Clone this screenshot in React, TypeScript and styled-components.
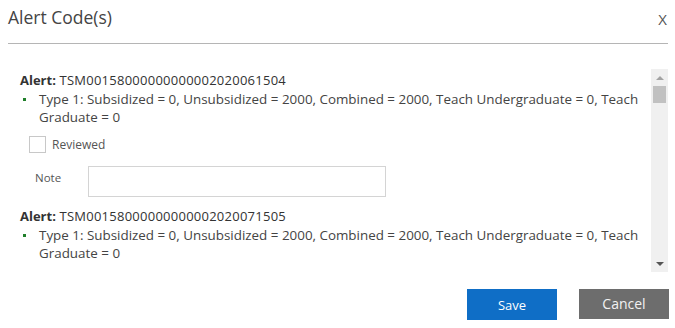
import React from "react";
import styled, { createGlobalStyle } from "styled-components";

const Global = createGlobalStyle`
  html, body { margin: 0; padding: 0; background: #fff; }
  body { font-family: "Open Sans", "Liberation Sans", sans-serif; color: #333; }
  * { box-sizing: border-box; }
`;

const Dialog = styled.div`
  width: 675px;
  height: 328px;
  padding: 0 6px 0 8px;
  display: flex;
  flex-direction: column;
`;

const Header = styled.div`
  height: 44px;
  display: flex;
  align-items: flex-start;
  justify-content: space-between;
  border-bottom: 1px solid #b5b5b5;
  padding-top: 5px;
  margin-right: 1px;
`;

const Title = styled.h1`
  margin: 0;
  font-size: 17.5px;
  font-weight: 400;
  color: #444;
  line-height: 24px;
`;

const Close = styled.button`
  border: none;
  background: none;
  padding: 0;
  margin: 4px 1px 0 0;
  font-family: "Open Sans", sans-serif;
  font-size: 15px;
  color: #555;
  line-height: 20px;
  cursor: pointer;
`;

const Body = styled.div`
  margin-top: 25px;
  height: 203px;
  display: flex;
  margin-right: 1px;
`;

const Content = styled.div`
  flex: 1;
  overflow: hidden;
  padding: 2px 5px 0 12px;
`;

const Alert = styled.div`
  font-size: 13px;
  letter-spacing: 0.25px;
  line-height: 18px;
  color: #333;
  b { font-weight: 700; letter-spacing: 0; }
`;

const List = styled.ul`
  margin: 1px 0 0;
  padding: 0 0 0 19px;
  list-style: none;
`;

const Item = styled.li`
  position: relative;
  font-size: 13.4px;
  line-height: 18px;
  color: #444;
  &::before {
    content: "";
    position: absolute;
    left: -16px;
    top: 8px;
    width: 3px;
    height: 3px;
    background: #1f7f2a;
  }
`;

const CheckRow = styled.label`
  display: flex;
  align-items: center;
  gap: 6px;
  margin: 9px 0 0 9px;
  font-size: 12px;
  color: #555;
  height: 18px;
`;

const Box = styled.span`
  width: 17px;
  height: 17px;
  border: 1px solid #c8c8c8;
  background: #fff;
`;

const NoteRow = styled.div`
  display: flex;
  align-items: center;
  margin: 13px 0 10px 15px;
`;

const NoteLabel = styled.span`
  width: 53px;
  font-size: 11.5px;
  color: #555;
  margin-top: -8px;
`;

const NoteInput = styled.div`
  width: 298px;
  height: 31px;
  border: 1px solid #d4d4d4;
`;

const Scrollbar = styled.div`
  width: 17px;
  background: #f0f0f0;
  display: flex;
  flex-direction: column;
  align-items: center;
`;

const Arrow = styled.div<{ $down?: boolean }>`
  width: 0;
  height: 0;
  border-left: 4px solid transparent;
  border-right: 4px solid transparent;
  ${(p) =>
    p.$down
      ? "border-top: 4px solid #555; margin-top: auto; margin-bottom: 6px;"
      : "border-bottom: 4px solid #a3a3a3; margin-top: 7px;"}
`;

const Thumb = styled.div`
  width: 13px;
  height: 17px;
  margin-top: 6px;
  background: #c1c1c1;
`;

const Footer = styled.div`
  display: flex;
  justify-content: flex-end;
  gap: 22px;
  margin-top: 17px;
`;

const Button = styled.button<{ $variant: "save" | "cancel" }>`
  width: 90px;
  height: ${(p) => (p.$variant === "save" ? 31 : 30)}px;
  border: none;
  font-family: "Open Sans", sans-serif;
  font-size: ${(p) => (p.$variant === "save" ? 13 : 14)}px;
  color: ${(p) => (p.$variant === "save" ? "#fff" : "#f2f2f2")};
  background: ${(p) => (p.$variant === "save" ? "#0f6ec6" : "#6d6d6d")};
  padding: ${(p) => (p.$variant === "save" ? "0" : "0 0 2px")};
  cursor: pointer;
`;

const alerts = [
  { code: "TSM00158000000000002020061504" },
  { code: "TSM00158000000000002020071505" },
];

const detail =
  "Type 1: Subsidized = 0, Unsubsidized = 2000, Combined = 2000, Teach Undergraduate = 0, Teach Graduate = 0";

export default function App() {
  return (
    <>
      <Global />
      <Dialog>
        <Header>
          <Title>Alert Code(s)</Title>
          <Close>X</Close>
        </Header>
        <Body>
          <Content>
            {alerts.map((a, i) => (
              <div key={a.code}>
                <Alert>
                  <b>Alert:</b> {a.code}
                </Alert>
                <List>
                  <Item>{detail}</Item>
                </List>
                {i === 0 && (
                  <>
                    <CheckRow>
                      <Box />
                      Reviewed
                    </CheckRow>
                    <NoteRow>
                      <NoteLabel>Note</NoteLabel>
                      <NoteInput />
                    </NoteRow>
                  </>
                )}
              </div>
            ))}
          </Content>
          <Scrollbar>
            <Arrow />
            <Thumb />
            <Arrow $down />
          </Scrollbar>
        </Body>
        <Footer>
          <Button $variant="save">Save</Button>
          <Button $variant="cancel">Cancel</Button>
        </Footer>
      </Dialog>
    </>
  );
}
